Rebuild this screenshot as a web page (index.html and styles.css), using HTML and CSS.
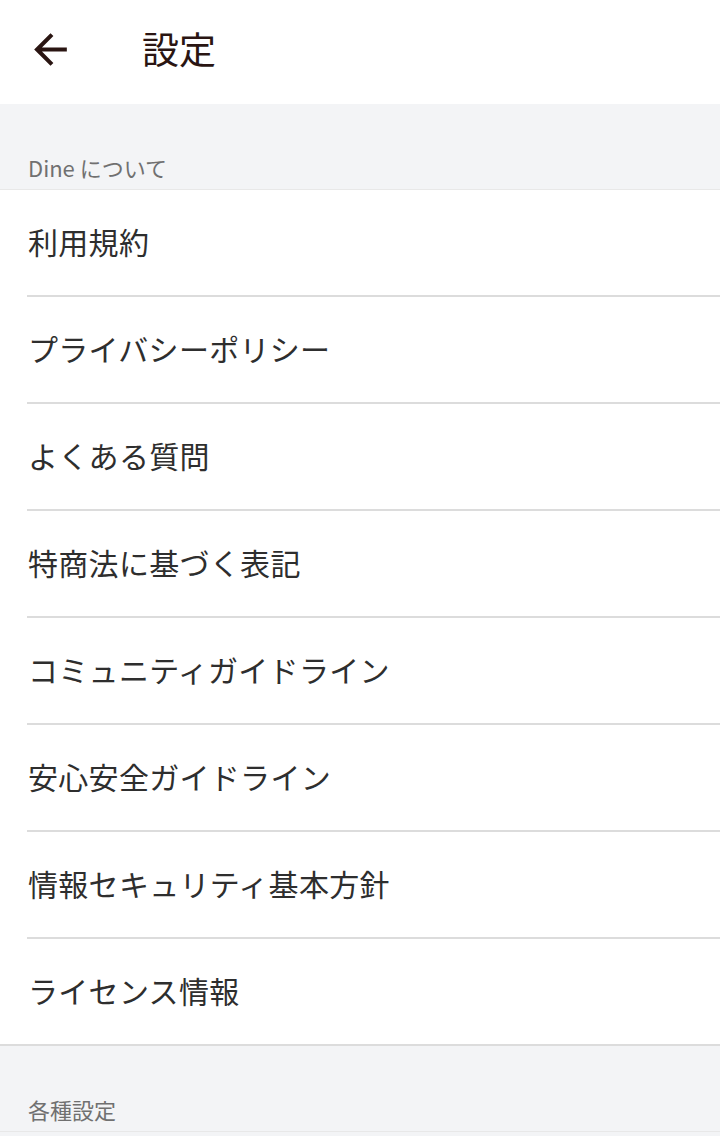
FILE: index.html
```html
<!DOCTYPE html>
<html lang="ja">
<head>
    <meta charset="UTF-8">
    <meta name="viewport" content="width=device-width, initial-scale=1.0">
    <title>設定</title>
    <link rel="stylesheet" href="styles.css">
</head>
<body>
    <header class="top-bar">
        <button class="back" aria-label="戻る">
            <svg viewBox="0 0 24 24" width="49" height="49"><path d="M20 11H7.83l5.59-5.59L12 4l-8 8 8 8 1.41-1.41L7.83 13H20v-2z" fill="#2a1512"/></svg>
        </button>
        <h1>設定</h1>
    </header>

    <div class="section-label">Dine について</div>
    <ul class="menu">
        <li class="row"><span class="row-inner">利用規約</span></li>
        <li class="row"><span class="row-inner">プライバシーポリシー</span></li>
        <li class="row"><span class="row-inner">よくある質問</span></li>
        <li class="row"><span class="row-inner">特商法に基づく表記</span></li>
        <li class="row"><span class="row-inner">コミュニティガイドライン</span></li>
        <li class="row"><span class="row-inner">安心安全ガイドライン</span></li>
        <li class="row"><span class="row-inner">情報セキュリティ基本方針</span></li>
        <li class="row"><span class="row-inner">ライセンス情報</span></li>
    </ul>

    <div class="section-label">各種設定</div>
</body>
</html>
```

FILE: styles.css
```css
body {
    margin: 0;
    font-family: "Noto Sans CJK JP", "Noto Sans", sans-serif;
    background-color: #f3f4f6;
    color: #2e2e2e;
}
.top-bar {
    height: 104px;
    background: #ffffff;
    display: flex;
    align-items: center;
}
.back {
    margin: -6px 0 0 26px;
    padding: 0;
    border: none;
    background: none;
    width: 49px;
    height: 49px;
    display: flex;
}
.top-bar h1 {
    margin: -8px 0 0 67px;
    font-size: 37px;
    font-weight: 400;
    color: #2a1512;
}
.section-label {
    height: 86px;
    box-sizing: border-box;
    padding: 48px 0 0 28px;
    font-size: 22px;
    line-height: 30px;
    color: #707070;
    border-bottom: 1px solid #e8e8e8;
}
.menu {
    list-style: none;
    margin: 0;
    padding: 0;
    background: #ffffff;
    border-bottom: 2px solid #dcdcdc;
}
.row {
    padding-left: 27px;
}
.row-inner {
    height: 107px;
    box-sizing: border-box;
    display: flex;
    align-items: center;
    padding: 0 0 4px 1px;
    font-size: 30px;
    letter-spacing: 0.3px;
    border-bottom: 2px solid #dcdcdc;
}
.row:last-child .row-inner {
    height: 105px;
    border-bottom: none;
}
```
